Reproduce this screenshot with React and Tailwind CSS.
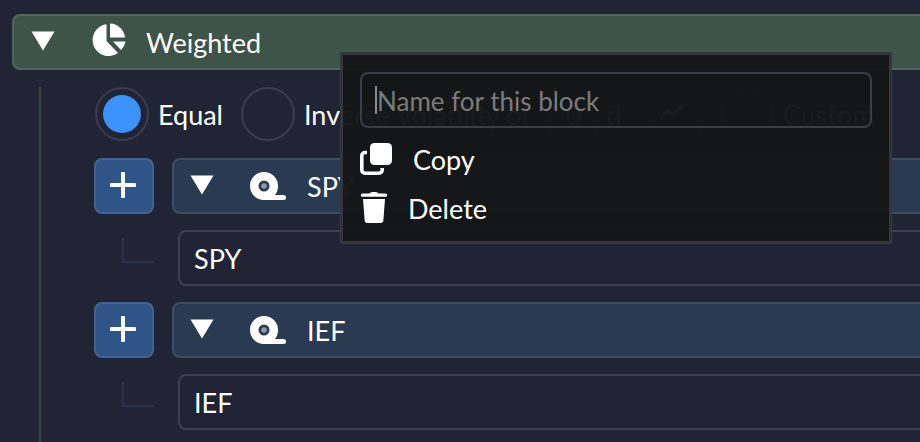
import React from 'react';

const PieIcon = () => (
  <svg width="34" height="34" viewBox="0 0 34 34" fill="white" className="shrink-0">
    <path d="M14.5 1.2V18L26 30A16 16 0 1 1 14.5 1.2Z" />
    <path d="M18 0.6A15.5 15.5 0 0 1 33 14.5H18Z" />
    <path d="M21 18.5H33.6A16 16 0 0 1 29 27Z" />
  </svg>
);

const TapeIcon = () => (
  <svg width="36" height="28" viewBox="0 0 36 28" className="shrink-0">
    <path fillRule="evenodd" fill="white" d="M14 0A14 14 0 0 1 28 14C28 17.5 27 20.5 25 23H33.5A2.5 2.5 0 0 1 33.5 28H14A14 14 0 0 1 14 0ZM14 8.5A5.5 5.5 0 1 0 14 19.5A5.5 5.5 0 1 0 14 8.5Z" />
    <circle cx="14" cy="14" r="2.8" fill="#8d99ab" />
  </svg>
);

const CopyIcon = () => (
  <svg width="32" height="32" viewBox="0 0 32 32" fill="white" className="shrink-0">
    <rect x="10" y="0" width="22" height="22" rx="4.5" />
    <path fill="none" stroke="white" strokeWidth="3.6" d="M7 9.5H5A3.2 3.2 0 0 0 1.8 12.7V27A3.2 3.2 0 0 0 5 30.2H19A3.2 3.2 0 0 0 22.2 27V25" />
  </svg>
);

const TrashIcon = () => (
  <svg width="28" height="32" viewBox="0 0 28 32" fill="white" className="shrink-0">
    <path d="M9.5 2.5C11 0.6 17 0.6 18.5 2.5H25.5A1.6 1.6 0 0 1 25.5 5.8H2.5A1.6 1.6 0 0 1 2.5 2.5Z" />
    <path d="M3 8H25L23.4 29A3 3 0 0 1 20.4 32H7.6A3 3 0 0 1 4.6 29Z" />
  </svg>
);

const Caret = () => (
  <svg width="24" height="20" viewBox="0 0 24 20" fill="white" className="shrink-0">
    <path d="M0.5 0.5H23.5L12 19.5Z" />
  </svg>
);

const ChartIcon = () => (
  <svg width="26" height="18" viewBox="0 0 26 18" fill="none" stroke="currentColor" strokeWidth="3">
    <path d="M1 16L9 8L13 12L24 2" />
  </svg>
);

const tickers = ['SPY', 'IEF'];

const TickerBlock = ({ name }) => (
  <div className="flex flex-col gap-4">
    <div className="flex gap-[18px]">
      <button className="w-[60px] h-14 shrink-0 flex items-center justify-center rounded-lg bg-[#2f5488] border-2 border-[#43628f] pr-0.5 pb-0.5">
        <svg width="26" height="26" viewBox="0 0 26 26" stroke="white" strokeWidth="4" strokeLinecap="round">
          <path d="M13 1.5V24.5M1.5 13H24.5" />
        </svg>
      </button>
      <div className="flex-1 h-14 flex items-center rounded-lg bg-[#293a51] border-2 border-[#414d62] pl-4">
        <div className="mb-0.5"><Caret /></div>
        <div className="ml-[36px] mr-[21px]"><TapeIcon /></div>
        <span className="text-white pt-0.5">{name}</span>
      </div>
    </div>
    <div className="flex">
      <div className="w-[84px] shrink-0 flex justify-end pr-6">
        <div className="w-[32px] h-[25px] mt-2 border-l-2 border-b-2 border-[#25354b]" />
      </div>
      <div className="flex-1 h-14 flex items-center rounded-lg border-2 border-[#3c4050] pl-[14px] text-white pt-0.5">
        {name}
      </div>
    </div>
  </div>
);

const App = () => {
  return (
    <div className="relative w-[920px] h-[442px] overflow-hidden bg-[#202435] text-[27px] font-['Lato','sans-serif']">
      <div className="pt-[14px] pl-3">
        <div className="w-[1000px] h-14 flex items-center rounded-lg bg-[#3f5449] border-2 border-[#52645b] pl-[17px]">
          <div className="mb-0.5"><Caret /></div>
          <div className="ml-[37px] mr-5 mb-1"><PieIcon /></div>
          <span className="text-white pt-0.5">Weighted</span>
        </div>
      </div>

      <div className="ml-[39px] mt-6 h-[400px] border-l-2 border-[#35473f] pl-[53px]">
        <div className="flex items-center h-[54px] ml-px -mt-[7px] mb-[17px] whitespace-nowrap w-[1000px]">
          <div className="w-[54px] h-[54px] rounded-full border-2 border-[#3c3e4e] flex items-center justify-center shrink-0">
            <div className="w-[38px] h-[38px] rounded-full bg-[#3b93fb]" />
          </div>
          <span className="ml-[9px] text-white pt-0.5">Equal</span>
          <div className="ml-[18px] w-[54px] h-[54px] rounded-full border-2 border-[#3c3e4e] shrink-0" />
          <span className="ml-[9px] text-white pt-0.5">Inverse Volatility of</span>
          <div className="ml-[19px] w-[48px] h-[54px] rounded-lg border-2 border-[#3c3e4e] flex items-center justify-center text-white pt-0.5">0</div>
          <span className="ml-[9px] text-white pt-0.5">d</span>
          <div className="ml-[31px] w-[49px] h-[54px] rounded-lg border-2 border-[#3c3e4e] flex items-center pl-1 pb-1 text-white"><ChartIcon /></div>
          <div className="ml-[18px] w-[54px] h-[54px] rounded-full border-2 border-[#3c3e4e] shrink-0" />
          <span className="ml-[9px] text-white pt-0.5">Custom</span>
        </div>
        <div className="flex flex-col gap-4 w-[900px]">
          {tickers.map((name) => (
            <TickerBlock key={name} name={name} />
          ))}
        </div>
      </div>

      <div className="absolute left-[340px] top-[52px] w-[552px] h-[192px] bg-[#151617]/[0.98] border-[3px] border-[#33363f] pt-[17px] px-[17px]">
        <div className="h-14 rounded-lg border-2 border-[#3c3d47] flex items-center pl-[13px]">
          <div className="w-0.5 h-[28px] bg-[#8a8a8a]" />
          <span className="text-[#7b7b7b] text-[26px] pt-0.5">Name for this block</span>
        </div>
        <div className="flex items-center mt-[15px] h-[32px] text-white">
          <CopyIcon />
          <span className="ml-[21px] pt-0.5">Copy</span>
        </div>
        <div className="flex items-center mt-[16px] h-[32px] text-white">
          <TrashIcon />
          <span className="ml-5 pt-1">Delete</span>
        </div>
      </div>
    </div>
  );
};

export default App;
